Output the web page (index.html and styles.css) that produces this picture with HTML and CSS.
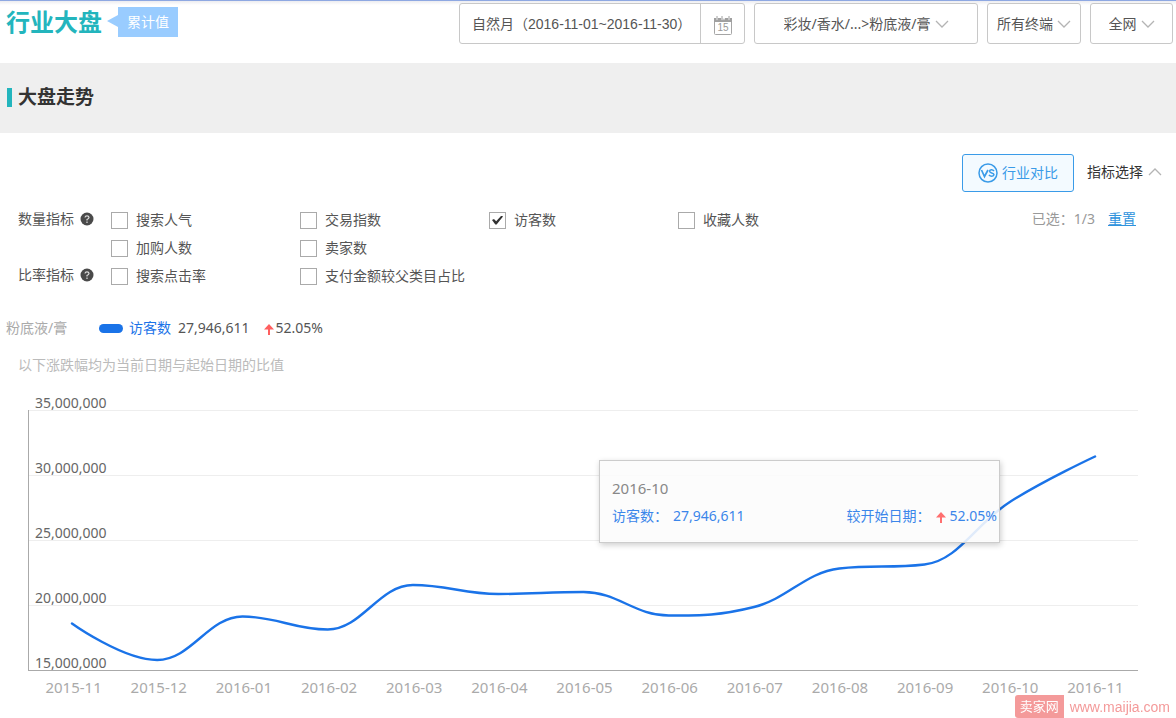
FILE: index.html
```html
<!DOCTYPE html>
<html lang="zh-CN">
<head>
<meta charset="utf-8">
<title>行业大盘</title>
<link rel="stylesheet" href="styles.css">
</head>
<body>
<header class="topbar">
  <h1 class="title">行业大盘</h1>
  <span class="badge">累计值</span>
  <div class="filters">
    <div class="box date">
      <input class="date-text" type="text" aria-label="日期" value="自然月（2016-11-01~2016-11-30）">
      <button class="date-btn" type="button" aria-label="选择日期">
        <svg width="20" height="20" viewBox="0 0 20 20">
          <path d="M1.5 6v11.5q0 1 1 1h15q1 0 1-1V6" fill="none" stroke="#a5a5a5"/>
          <path d="M1 2h2l1 2.500 1-2.500h3l1 2.500L10 2l1 2.500L12 2h3l1 2.500L17 2h2v4H1z" fill="#a0a0a0"/>
          <path d="M4 0v3M9 0v3M16 0v3" stroke="#a0a0a0"/>
          <text class="cal-day" x="10" y="15" text-anchor="middle">15</text>
        </svg>
      </button>
    </div>
    <label class="box drop wide">
      <select aria-label="类目"><option>彩妆/香水/...&gt;粉底液/膏</option></select>
      <svg class="chev" width="14" height="8" viewBox="0 0 14 8"><path d="M1 1l6 6 6-6"/></svg>
    </label>
    <label class="box drop mid">
      <select aria-label="终端"><option>所有终端</option></select>
      <svg class="chev" width="14" height="8" viewBox="0 0 14 8"><path d="M1 1l6 6 6-6"/></svg>
    </label>
    <label class="box drop small">
      <select aria-label="范围"><option>全网</option></select>
      <svg class="chev" width="14" height="8" viewBox="0 0 14 8"><path d="M1 1l6 6 6-6"/></svg>
    </label>
  </div>
</header>

<div class="section-head"><h2>大盘走势</h2></div>

<main>
  <div class="actions">
    <button class="compare" type="button">
      <svg width="20" height="20" viewBox="0 0 20 20">
        <circle cx="10" cy="10" r="9" fill="none" stroke="#3a9be8" stroke-width="1.500"/>
        <path d="M3.500 7l3 6.500L10 7" fill="none" stroke="#3a9be8" stroke-width="1.700"/>
        <path d="M16 8q-1-1.300-2.700-1.200Q11.500 7 11.600 8.300q.1 1.200 2.100 1.600 2.300.5 2.300 1.800-.2 1.500-2.200 1.600-1.900 0-2.900-1.400" fill="none" stroke="#3a9be8" stroke-width="1.500"/>
      </svg>
      行业对比
    </button>
    <button class="choose" type="button">指标选择
      <svg class="chev" width="14" height="8" viewBox="0 0 14 8"><path d="M1 7l6-6 6 6"/></svg>
    </button>
  </div>

  <div class="metrics">
    <div class="groups">
      <div class="group">
        <span class="group-name">数量指标
          <svg width="14" height="14" viewBox="0 0 14 14"><circle cx="7" cy="7" r="6.500" fill="#4a4a4a"/><path d="M5 5.500Q5.200 3.800 7 3.800T9 5.400Q9 6.300 7 7.500V8.400M7 9.600v1.300" fill="none" stroke="#ddd" stroke-width="1.200"/></svg>
        </span>
        <div class="options">
          <label><input type="checkbox">搜索人气</label>
          <label><input type="checkbox">交易指数</label>
          <label><input type="checkbox" checked>访客数</label>
          <label><input type="checkbox">收藏人数</label>
          <label><input type="checkbox">加购人数</label>
          <label><input type="checkbox">卖家数</label>
        </div>
      </div>
      <div class="group">
        <span class="group-name">比率指标
          <svg width="14" height="14" viewBox="0 0 14 14"><circle cx="7" cy="7" r="6.500" fill="#4a4a4a"/><path d="M5 5.500Q5.200 3.800 7 3.800T9 5.400Q9 6.300 7 7.500V8.400M7 9.600v1.300" fill="none" stroke="#ddd" stroke-width="1.200"/></svg>
        </span>
        <div class="options">
          <label><input type="checkbox">搜索点击率</label>
          <label><input type="checkbox">支付金额较父类目占比</label>
        </div>
      </div>
    </div>
    <div class="picked"><span>已选：1/3</span><a href="#reset">重置</a></div>
  </div>

  <div class="legend">
    <span class="cat">粉底液/膏</span>
    <span class="swatch"></span>
    <span class="series">访客数</span>
    <span class="total">27,946,611</span>
    <svg class="up" width="10" height="11" viewBox="0 0 10 11"><path d="M5 0l5 5.500H6V11H4V5.500H0z"/></svg>
    <span>52.05%</span>
  </div>
  <p class="note">以下涨跌幅均为当前日期与起始日期的比值</p>

  <div class="chart">
    <div class="top-label">35,000,000</div>
    <div class="plot">
      <div class="band">30,000,000</div>
      <div class="band">25,000,000</div>
      <div class="band">20,000,000</div>
      <div class="band">15,000,000</div>
      <svg class="curve" viewBox="0 0 1110 260" preserveAspectRatio="none">
        <path d="M43 213.500C43 213.500 94.200 250 128.300 250S179.600 206.500 213.700 206.500S264.900 219.500 299 219.500S350.200 175 384.300 175S435.600 184 469.700 184S520.900 182 555 182S606.200 205.500 640.300 205.500S691.600 205.500 725.700 197C759.800 188.500 776.900 162.500 811 158.500C845.100 154.500 862.200 158.500 896.300 154.500C930.400 150.500 947.600 113.600 981.700 92C1015.800 70.400 1067 46.500 1067 46.500"/>
      </svg>
      <div class="tooltip">
        <div class="tip-date">2016-10</div>
        <div class="tip-row">
          <span class="tip-name">访客数：</span><span>27,946,611</span>
          <span class="tip-change">较开始日期：</span>
          <svg class="up" width="10" height="11" viewBox="0 0 10 11"><path d="M5 0l5 5.500H6V11H4V5.500H0z"/></svg>
          <span>52.05%</span>
        </div>
      </div>
    </div>
    <div class="months">
      <span>2015-11</span><span>2015-12</span><span>2016-01</span><span>2016-02</span><span>2016-03</span><span>2016-04</span><span>2016-05</span><span>2016-06</span><span>2016-07</span><span>2016-08</span><span>2016-09</span><span>2016-10</span><span>2016-11</span>
    </div>
  </div>
</main>
<div class="watermark"><span class="mark">卖家网</span><span>www.maijia.com</span></div>
</body>
</html>
```

FILE: styles.css
```css
* { box-sizing: border-box; }
body {
  margin: 0;
  background: #fff;
  color: #555;
  font: 14px/20px "Noto Sans", "Noto Sans CJK SC", sans-serif;
}
h1, h2, p { margin: 0; }
button, input, select { font: inherit; color: inherit; margin: 0; }
button { cursor: pointer; }
svg { flex: none; }

.topbar {
  display: flex;
  align-items: flex-start;
  height: 63px;
  padding: 2px 3px 0 6px;
  border-top: 1px solid #8ea8e2;
  background: linear-gradient(#ececf0, #fff 4px);
}
.title {
  color: #23b5bd;
  font-size: 24px;
  line-height: 38px;
}
.badge {
  position: relative;
  margin: 4px 0 0 16px;
  padding: 0 9px;
  background: #99ccff;
  color: #fff;
  line-height: 30px;
}
.badge::before {
  content: "";
  position: absolute;
  left: -11px;
  top: 8px;
  border: 6px solid transparent;
  border-left: 0;
  border-right: 11px solid #99ccff;
}
.filters { display: flex; gap: 9px; margin-left: auto; }
.box {
  display: flex;
  align-items: center;
  height: 41px;
  background: #fff;
  border: 1px solid #c8c8c8;
  border-radius: 3px;
}
.date { width: 286px; align-items: stretch; }
.date-text {
  flex: 1;
  min-width: 0;
  padding: 0 0 0 12px;
  border: 0;
  background: none;
  font-family: "Liberation Sans", "Noto Sans CJK SC", sans-serif;
}
.date-btn {
  display: flex;
  align-items: center;
  justify-content: center;
  width: 44px;
  padding: 4px 0 0;
  border: 0;
  border-left: 1px solid #c8c8c8;
  background: none;
}
.cal-day { font: 10px "Liberation Sans", sans-serif; fill: #999; }
.drop { justify-content: center; gap: 4px; }
.drop select { appearance: none; border: 0; padding: 0; background: none; }
.chev path { fill: none; stroke: #b4b4b4; stroke-width: 1.3; }
.wide { width: 224px; }
.mid { width: 94px; }
.small { width: 83px; }

.section-head {
  display: flex;
  align-items: center;
  height: 70px;
  padding: 0 7px 2px;
  background: #efefef;
}
.section-head h2 {
  padding-left: 6px;
  border-left: 5px solid #23b5bd;
  color: #333;
  font-size: 19px;
  line-height: 19px;
}

.actions {
  display: flex;
  justify-content: flex-end;
  gap: 13px;
  padding: 21px 14px 0 0;
}
.compare {
  display: flex;
  align-items: center;
  justify-content: center;
  gap: 4px;
  width: 112px;
  height: 38px;
  padding: 0;
  border: 1px solid #3a9be8;
  border-radius: 3px;
  background: #f3faff;
  color: #3a9be8;
}
.choose {
  display: flex;
  align-items: center;
  gap: 5px;
  height: 36px;
  padding: 0;
  border: 0;
  background: none;
  color: #333;
}

.metrics {
  display: flex;
  justify-content: space-between;
  padding: 14px 40px 0 18px;
}
.groups { flex: 1; }
.group { display: flex; }
.group-name {
  display: flex;
  align-items: center;
  gap: 6px;
  width: 93px;
  height: 26px;
}
.options {
  flex: 1;
  display: grid;
  grid-template-columns: repeat(4, minmax(0, 189px));
}
.options label {
  display: flex;
  align-items: center;
  gap: 8px;
  height: 28px;
  white-space: nowrap;
}
.options input {
  appearance: none;
  display: grid;
  place-items: center;
  width: 17px;
  height: 17px;
  border: 1px solid #aaa;
  background: #fff;
}
.options input:checked::before {
  content: "";
  width: 11px;
  height: 9px;
  background: #333;
  clip-path: polygon(0 50%, 18% 40%, 38% 65%, 86% 0, 100% 10%, 42% 100%, 30% 100%);
}
.picked { display: flex; gap: 13px; height: 26px; align-items: center; color: #999; }
.picked a { color: #2e93dd; }

.legend {
  display: flex;
  align-items: center;
  height: 20px;
  margin-top: 28px;
  padding-left: 6px;
}
.cat { width: 93px; color: #aaa; }
.swatch { width: 24px; height: 9px; border-radius: 5px; background: #1a73e8; }
.series { margin-left: 6px; color: #1a73e8; }
.total { margin: 0 14px 0 7px; }
.up { margin: 2px 2px 0 0; fill: #ff5f5f; }
.note { margin-top: 17px; padding-left: 18px; color: #bbb; }

.chart { padding: 18px 38px 0 28px; }
.top-label { padding-left: 7px; line-height: 20px; height: 17px; color: #666; }
.plot {
  position: relative;
  border-left: 1px solid #aaa;
  border-bottom: 1px solid #aaa;
}
.band {
  display: flex;
  align-items: flex-end;
  height: 65px;
  padding-left: 6px;
  border-top: 1px solid #eee;
  color: #666;
  line-height: 14px;
}
.curve { position: absolute; inset: 0; width: 100%; height: 100%; }
.curve path {
  fill: none;
  stroke: #1a73e8;
  stroke-width: 2.4;
  stroke-linecap: round;
  vector-effect: non-scaling-stroke;
}
.tooltip {
  position: absolute;
  top: 50px;
  right: 138px;
  width: 401px;
  height: 83px;
  padding: 17px 2px 0 12px;
  border: 1px solid #ccc;
  background: rgba(252, 252, 252, 0.88);
  box-shadow: 1px 2px 6px rgba(0, 0, 0, 0.2);
}
.tip-date { color: #888; font-size: 15px; line-height: 20px; }
.tip-row { display: flex; align-items: center; margin-top: 8px; color: #3b86ea; }
.tip-name { margin-right: 5px; }
.tip-change { margin-left: auto; margin-right: 5px; }
.tip-row .up { margin-right: 4px; fill: #ff6f6f; }
.months {
  display: grid;
  grid-template-columns: repeat(13, 1fr);
  padding: 6px 0 0 3px;
  color: #aaa;
  font-size: 15px;
  text-align: center;
}
.watermark {
  position: fixed;
  right: 6px;
  bottom: 0;
  display: flex;
  align-items: center;
  gap: 6px;
  color: #f49a9a;
  font-family: "Liberation Sans", "Noto Sans CJK SC", sans-serif;
}
.mark {
  padding: 2px 5px 1px;
  border-radius: 3px 0 0 3px;
  background: #f49a9a;
  color: #fff;
  font-size: 13px;
}
```
